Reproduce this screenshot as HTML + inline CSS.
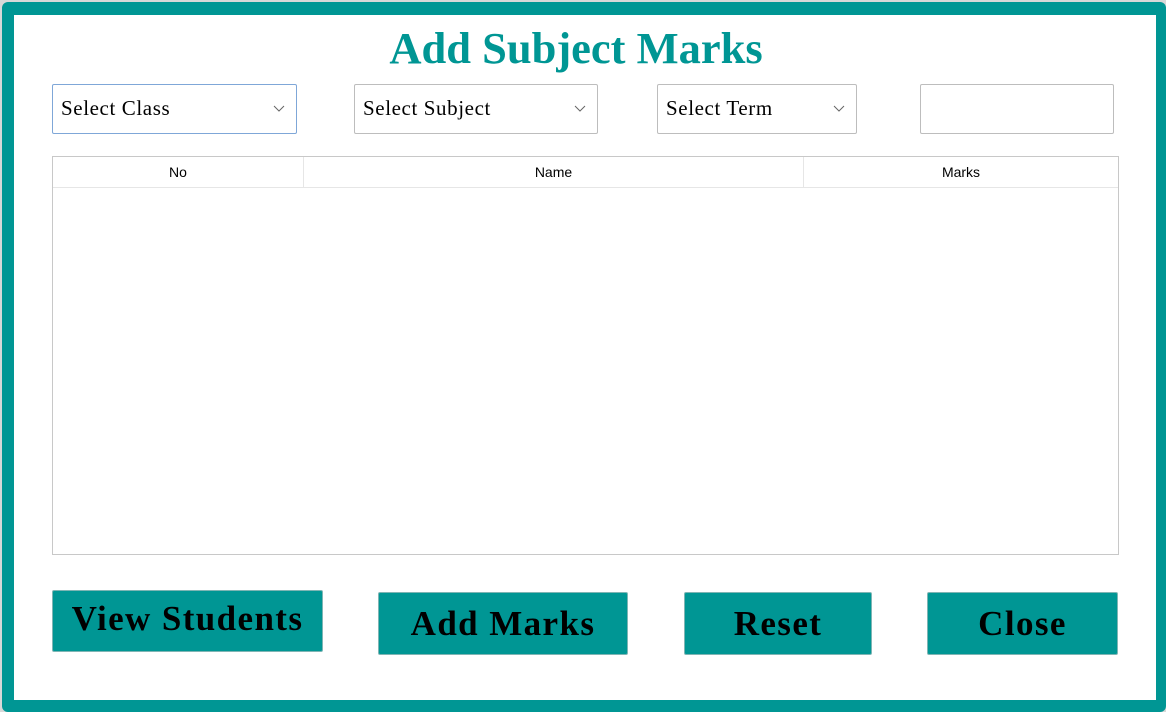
<!DOCTYPE html>
<html><head><style>
body{margin:0;width:1166px;height:712px;background:#d8d8d8;position:relative;overflow:hidden;font-family:"Liberation Serif",serif}
.frame{position:absolute;left:2px;top:2px;width:1164px;height:710px;background:#009694;border-radius:6px}
.inner{position:absolute;left:14px;top:15px;width:1142px;height:685px;background:#fff}
.a{position:absolute;box-sizing:border-box}
.title{left:0;width:1152px;top:22px;text-align:center;color:#009694;font-weight:bold;font-size:44.5px;line-height:52px}
.sel{border:1px solid #bdbdbd;border-radius:2px;background:#fff;font-size:21px;padding-left:8px;line-height:46px;letter-spacing:0.6px}
.sel svg{position:absolute;right:11px;top:20px}
.btn{background:#009694;border:1px solid #7fb5b4;border-radius:2px;text-align:center;font-weight:bold;font-size:35px;color:#000;letter-spacing:1.4px}
.th{font-family:"Liberation Sans",sans-serif;font-size:14px;text-align:center;line-height:31px;top:157px;height:31px;border-bottom:1px solid #e6e6e6}
</style></head><body>
<div class="frame"></div><div class="inner"></div>
<div class="a title">Add Subject Marks</div>
<div class="a sel" style="left:52px;top:84px;width:245px;height:50px;border-color:#7fa7d8">Select Class<svg width="12" height="7"><path d="M1 1l5 5 5-5" stroke="#666" fill="none"/></svg></div>
<div class="a sel" style="left:354px;top:84px;width:244px;height:50px">Select Subject<svg width="12" height="7"><path d="M1 1l5 5 5-5" stroke="#666" fill="none"/></svg></div>
<div class="a sel" style="left:657px;top:84px;width:200px;height:50px">Select Term<svg width="12" height="7"><path d="M1 1l5 5 5-5" stroke="#666" fill="none"/></svg></div>
<div class="a sel" style="left:920px;top:84px;width:194px;height:50px"></div>
<div class="a" style="left:52px;top:156px;width:1067px;height:399px;border:1px solid #c8c8c8"></div>
<div class="a th" style="left:53px;width:251px;border-right:1px solid #e6e6e6">No</div>
<div class="a th" style="left:304px;width:500px;border-right:1px solid #e6e6e6">Name</div>
<div class="a th" style="left:804px;width:314px">Marks</div>
<div class="a btn" style="left:52px;top:590px;width:271px;height:62px;line-height:56px">View Students</div>
<div class="a btn" style="left:378px;top:592px;width:250px;height:63px;line-height:62px">Add Marks</div>
<div class="a btn" style="left:684px;top:592px;width:188px;height:63px;line-height:62px">Reset</div>
<div class="a btn" style="left:927px;top:592px;width:191px;height:63px;line-height:62px">Close</div>
</body></html>
